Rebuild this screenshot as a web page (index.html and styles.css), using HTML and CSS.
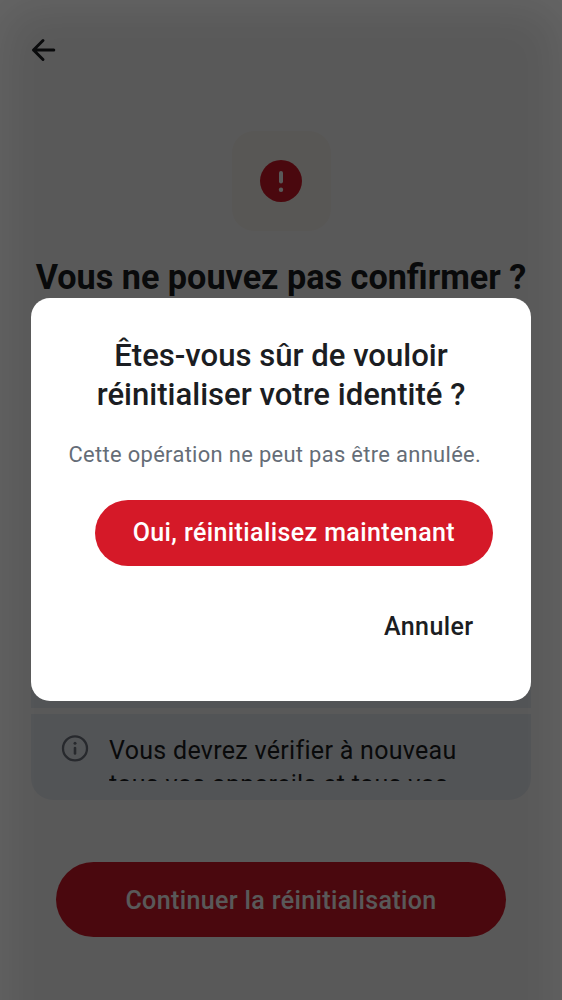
FILE: index.html
```html
<!DOCTYPE html>
<html lang="fr">
<head>
<meta charset="utf-8">
<title>Réinitialiser votre identité</title>
<link rel="stylesheet" href="styles.css">
</head>
<body>
<div class="app">
  <main class="screen">
    <header class="topbar">
      <svg class="back" viewBox="0 0 26 26" fill="none" stroke="currentColor" stroke-width="3" stroke-linecap="round" stroke-linejoin="round"><path d="M13 3.5 3.5 13l9.5 9.5M3.5 13h20.3"/></svg>
    </header>
    <div class="hero">
      <svg class="alert" viewBox="0 0 42 42"><circle cx="21" cy="21" r="21" fill="#d51928"/><rect x="19" y="11" width="4" height="12.4" rx="2" fill="#fff"/><circle cx="21" cy="29.7" r="2.2" fill="#fff"/></svg>
    </div>
    <h1 class="heading"><span>Vous ne pouvez pas confirmer ?</span></h1>
    <div class="list">
      <div class="row row-hidden"></div>
      <div class="row row-last">
        <svg class="info" viewBox="0 0 28 28" fill="none"><circle cx="14" cy="14.4" r="12" stroke="currentColor" stroke-width="2.3"/><path d="M14 14.1v5.3" stroke="currentColor" stroke-width="2.6" stroke-linecap="round"/><circle cx="14" cy="9.3" r="1.5" fill="currentColor"/></svg>
        <p class="row-text"><span>Vous devrez vérifier à nouveau</span><br><span>tous vos appareils et tous vos</span></p>
      </div>
    </div>
    <button class="primary"><span>Continuer la réinitialisation</span></button>
  </main>
  <div class="scrim"></div>
  <section class="dialog">
    <h2 class="dialog-title">Êtes-vous sûr de vouloir<br>réinitialiser votre identité ?</h2>
    <p class="dialog-text">Cette opération ne peut pas être annulée.</p>
    <div class="actions">
      <button class="confirm">Oui, réinitialisez maintenant</button>
      <button class="cancel">Annuler</button>
    </div>
  </section>
</div>
</body>
</html>
```
FILE: styles.css
```css
* { box-sizing: border-box; margin: 0; padding: 0; }
body { font-family: Roboto, "Liberation Sans", sans-serif; color: #1b1d22; background: #fff; }
button { border: 0; background: none; font: inherit; color: inherit; white-space: nowrap; }
svg { display: block; }
.app { position: relative; width: 562px; height: 1000px; overflow: hidden; }
.screen { display: flex; flex-direction: column; align-items: center; height: 1000px; }
.topbar { width: 100%; height: 131px; padding: 37px 30px; }
.back { width: 26px; height: 26px; }
.hero { display: flex; align-items: center; justify-content: center; width: 99px; height: 100px; border-radius: 22px; background: #fdf9f4; }
.alert { width: 42px; height: 42px; }
.heading { height: 44px; margin-top: 24px; font-size: 34.2px; font-weight: 700; line-height: 44px; white-space: nowrap; }
.list { display: flex; flex-direction: column; gap: 6px; width: 500px; margin-top: 309px; }
.row { background: #ecf0f6; }
.row-hidden { height: 100px; }
.row-last { display: flex; gap: 20px; height: 86px; padding: 20px 30px 19px; border-radius: 0 0 22px 22px; }
.info { width: 28px; height: 28px; color: #6f7580; }
.row-text { height: 47px; overflow: hidden; font-size: 25px; line-height: 34px; letter-spacing: .3px; white-space: nowrap; }
.primary { width: 450px; height: 75px; margin-top: 62.4px; padding-top: 1px; border-radius: 38px; background: #d51928; color: #fff; font-size: 25px; font-weight: 500; letter-spacing: .38px; }
.scrim { position: absolute; inset: 0 0 -60px; background: rgba(0, 0, 0, .65); box-shadow: inset 0 4px 52px rgba(255, 255, 255, .085); }
.dialog { position: absolute; left: 31px; top: 298px; width: 500px; height: 403.4px; padding: 38px 37.5px; border-radius: 19px; background: #fff; text-align: center; }
.dialog-title { font-size: 31.1px; font-weight: 500; line-height: 39px; white-space: nowrap; }
.dialog-text { margin-top: 25px; font-size: 21.9px; line-height: 31px; letter-spacing: .33px; color: #656d77; text-align: left; white-space: nowrap; }
.actions { display: flex; flex-direction: column; align-items: flex-end; margin-top: 30px; gap: 28px; }
.confirm { width: 398.5px; height: 65.6px; margin-right: .4px; border-radius: 33px; background: #d51928; color: #fff; font-size: 25px; font-weight: 500; letter-spacing: .4px; }
.cancel { height: 65.6px; padding: 0 20px; font-size: 25px; font-weight: 500; letter-spacing: .4px; }
```
